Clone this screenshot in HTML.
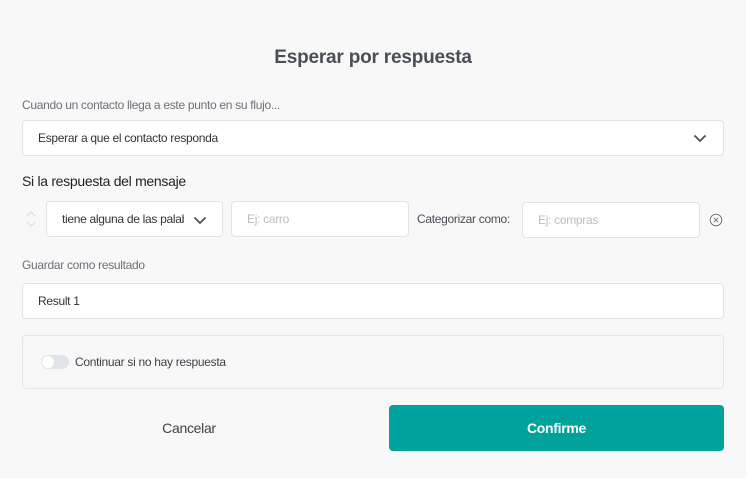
<!DOCTYPE html>
<html><head><style>
body{margin:0;width:746px;height:478px;background:#f8f8f8;font-family:"Liberation Sans",sans-serif;position:relative;overflow:hidden;letter-spacing:-0.3px}
.a{position:absolute}
.box{position:absolute;background:#fff;border:1px solid #e1e3e8;border-radius:4px;box-sizing:border-box;font-size:12px;color:#333;display:flex;align-items:center;padding-left:15px}
.ph{color:#b9bdc4}
</style></head><body>
<div class="a" style="left:0;width:746px;top:47px;text-align:center;font-size:19px;font-weight:bold;color:#4a4f57;letter-spacing:-0.2px">Esperar por respuesta</div>
<div class="a" style="left:22px;top:98px;font-size:12px;color:#6b7079">Cuando un contacto llega a este punto en su flujo...</div>
<div class="box" style="left:22px;top:120px;width:702px;height:36px">Esperar a que el contacto responda
<svg class="a" style="left:670px;top:13px" width="14" height="9" viewBox="0 0 14 9"><path d="M1.5 1.5 7 7 12.5 1.5" fill="none" stroke="#4a4f57" stroke-width="1.8"/></svg></div>
<div class="a" style="left:22px;top:173px;font-size:14px;color:#222">Si la respuesta del mensaje</div>
<svg class="a" style="left:25px;top:209px" width="12" height="20" viewBox="0 0 12 20"><path d="M2 7 6 3 10 7M2 13 6 17 10 13" fill="none" stroke="#d5d8dd" stroke-width="1"/></svg>
<div class="box" style="left:46px;top:201px;width:177px;height:36px"><span style="display:block;width:122px;overflow:hidden;white-space:nowrap">tiene alguna de las palabras</span>
<svg class="a" style="left:146px;top:14px" width="14" height="9" viewBox="0 0 14 9"><path d="M1.5 1.5 7 7 12.5 1.5" fill="none" stroke="#4a4f57" stroke-width="1.8"/></svg></div>
<div class="box ph" style="left:231px;top:201px;width:178px;height:36px">Ej: carro</div>
<div class="a" style="left:417px;top:212px;font-size:12px;color:#4a4f57">Categorizar como:</div>
<div class="box ph" style="left:522px;top:202px;width:178px;height:36px">Ej: compras</div>
<svg class="a" style="left:709px;top:213px" width="14" height="14" viewBox="0 0 14 14"><circle cx="7" cy="7" r="5.8" fill="none" stroke="#777" stroke-width="1"/><path d="M4.8 4.8 9.2 9.2M9.2 4.8 4.8 9.2" stroke="#777" stroke-width="1"/></svg>
<div class="a" style="left:22px;top:258px;font-size:12px;color:#6b7079">Guardar como resultado</div>
<div class="box" style="left:22px;top:283px;width:702px;height:36px">Result 1</div>
<div class="a" style="left:22px;top:335px;width:702px;height:54px;border:1px solid #e3e5ea;border-radius:4px;box-sizing:border-box"></div>
<div class="a" style="left:41px;top:355px;width:28px;height:14px;border-radius:7px;background:#e1e4ea"></div>
<div class="a" style="left:42px;top:356px;width:12px;height:12px;border-radius:6px;background:#fff"></div>
<div class="a" style="left:75px;top:355px;font-size:12px;color:#3d424a">Continuar si no hay respuesta</div>
<div class="a" style="left:22px;width:334px;top:420px;text-align:center;font-size:14px;color:#3d424a">Cancelar</div>
<div class="a" style="left:389px;top:405px;width:335px;height:46px;background:#00a39b;border-radius:4px;color:#fff;font-size:14px;font-weight:bold;display:flex;align-items:center;justify-content:center">Confirme</div>
</body></html>
